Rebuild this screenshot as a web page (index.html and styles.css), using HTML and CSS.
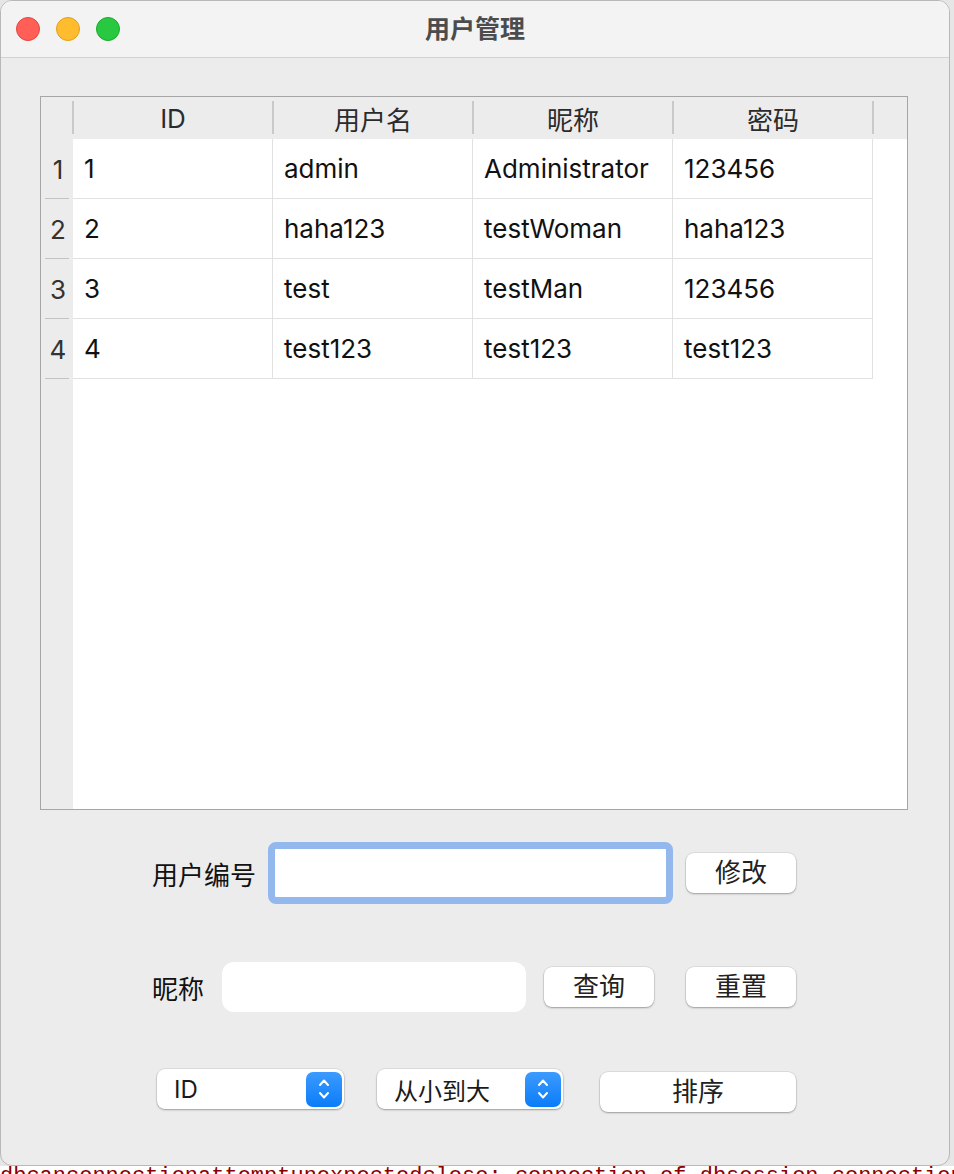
FILE: index.html
```html
<!DOCTYPE html>
<html lang="zh">
<head>
<meta charset="utf-8">
<title>用户管理</title>
<link rel="stylesheet" href="styles.css">
</head>
<body>
<div class="page">
  <div class="window">
    <div class="titlebar">
      <div class="lights">
        <span class="light red"></span>
        <span class="light yellow"></span>
        <span class="light green"></span>
      </div>
      <div class="title">用户管理</div>
    </div>
    <div class="content">
      <div class="table">
        <div class="corner"></div>
        <div class="hcell">ID</div>
        <div class="hcell">用户名</div>
        <div class="hcell">昵称</div>
        <div class="hcell">密码</div>
        <div class="hfill"></div>

        <div class="rhead">1</div>
        <div class="cell">1</div><div class="cell">admin</div><div class="cell">Administrator</div><div class="cell">123456</div><div class="fill"></div>

        <div class="rhead">2</div>
        <div class="cell">2</div><div class="cell">haha123</div><div class="cell">testWoman</div><div class="cell">haha123</div><div class="fill"></div>

        <div class="rhead">3</div>
        <div class="cell">3</div><div class="cell">test</div><div class="cell">testMan</div><div class="cell">123456</div><div class="fill"></div>

        <div class="rhead">4</div>
        <div class="cell">4</div><div class="cell">test123</div><div class="cell">test123</div><div class="cell">test123</div><div class="fill"></div>

        <div class="rhead empty"></div>
        <div class="blank"></div>
      </div>

      <div class="row row1">
        <span class="label">用户编号</span>
        <div class="focusring"><div class="field"></div></div>
        <button class="btn b-modify">修改</button>
      </div>

      <div class="row row2">
        <span class="label">昵称</span>
        <div class="field plain"></div>
        <button class="btn b-query">查询</button>
        <button class="btn b-reset">重置</button>
      </div>

      <div class="row row3">
        <div class="select s1">
          <span class="sel-text">ID</span>
          <span class="stepper">
            <svg width="14" height="26" viewBox="0 0 14 26"><path d="M3 9 L7 4.5 L11 9" fill="none" stroke="#fff" stroke-width="2" stroke-linecap="round" stroke-linejoin="round"/><path d="M3 17 L7 21.5 L11 17" fill="none" stroke="#fff" stroke-width="2" stroke-linecap="round" stroke-linejoin="round"/></svg>
          </span>
        </div>
        <div class="select s2">
          <span class="sel-text">从小到大</span>
          <span class="stepper">
            <svg width="14" height="26" viewBox="0 0 14 26"><path d="M3 9 L7 4.5 L11 9" fill="none" stroke="#fff" stroke-width="2" stroke-linecap="round" stroke-linejoin="round"/><path d="M3 17 L7 21.5 L11 17" fill="none" stroke="#fff" stroke-width="2" stroke-linecap="round" stroke-linejoin="round"/></svg>
          </span>
        </div>
        <button class="btn b-sort">排序</button>
      </div>
    </div>
  </div>
  <div class="backdrop">dbcanconnectionattemptunexpectedclose; connection of dbsession connection</div>
</div>
</body>
</html>
```

FILE: styles.css
```css
* { box-sizing: border-box; }
html, body { margin: 0; padding: 0; }
body {
  background: #e6e6e6;
  font-family: Inter, "Noto Sans CJK SC", sans-serif;
  color: #1a1a1a;
  width: 954px;
  height: 1174px;
  overflow: hidden;
}
.page { width: 954px; }
.window {
  width: 950px;
  height: 1166px;
  background: #ececec;
  border: 1px solid #b8b8b8;
  border-radius: 12px;
  overflow: hidden;
}
.titlebar {
  height: 57px;
  background: #f3f3f3;
  border-bottom: 1px solid #d2d2d2;
  display: flex;
  align-items: center;
  position: relative;
}
.lights {
  display: flex;
  gap: 16px;
  padding-left: 15px;
}
.light {
  width: 24px; height: 24px;
  border-radius: 50%;
  display: block;
}
.red { background: #ff5f57; border: 1px solid #e2463f; }
.yellow { background: #febc2e; border: 1px solid #e1a116; }
.green { background: #28c840; border: 1px solid #1aab29; }
.title {
  position: absolute;
  left: 0; right: 0; top: 0;
  height: 56px;
  line-height: 56px;
  text-align: center;
  font-size: 25px;
  font-weight: 700;
  color: #4c4c4c;
}
.content {
  padding: 38px 0 0 39px;
}
.table {
  width: 868px;
  height: 714px;
  border: 1px solid #a6a6a6;
  display: grid;
  grid-template-columns: 32px 200px 200px 200px 200px 1fr;
  grid-template-rows: 42px 60px 60px 60px 60px 1fr;
  background: #fff;
  font-size: 26px;
}
.corner, .hcell, .hfill {
  background: #ececec;
  position: relative;
}
.corner::after, .hcell::after {
  content: "";
  position: absolute;
  right: -1px;
  top: 4px;
  bottom: 5px;
  width: 2px;
  background: #c9c9c9;
  z-index: 1;
}
.hcell {
  display: flex;
  align-items: center;
  justify-content: center;
  color: #2b2b2b;
}
.rhead {
  background: #ececec;
  display: flex;
  align-items: center;
  justify-content: center;
  color: #333;
  position: relative;
  padding-left: 2px;
}
.rhead::after {
  content: "";
  position: absolute;
  left: 4px;
  right: 4px;
  bottom: -1px;
  height: 2px;
  background: #c3c3c3;
}
.rhead.empty::after { display: none; }
.cell {
  display: flex;
  align-items: center;
  padding-left: 11px;
  border-right: 1px solid #e1e1e1;
  border-bottom: 1px solid #e1e1e1;
  color: #111;
}
.fill { background: #fff; }
.blank { grid-column: 2 / 7; background: #fff; }

.row {
  display: flex;
  align-items: center;
}
.label {
  font-size: 26px;
  color: #111;
}
.row1 {
  margin-top: 32px;
  height: 62px;
  padding-left: 112px;
}
.row1 .label { width: 116px; }
.focusring {
  width: 405px;
  height: 62px;
  border: 7px solid #92b8ee;
  border-radius: 8px;
  background: #fff;
  margin-right: 13px;
}
.field { height: 100%; background: #fff; border-radius: 6px; }
.btn {
  font-family: inherit;
  font-size: 26px;
  color: #222;
  background: #fff;
  border: none;
  border-radius: 8px;
  box-shadow: 0 0 0 0.5px rgba(0,0,0,0.12), 0 1px 2px rgba(0,0,0,0.3);
  width: 110px;
  height: 40px;
  padding: 0;
  line-height: 40px;
}
.row2 {
  margin-top: 58px;
  height: 50px;
  padding-left: 112px;
}
.row2 .label { width: 70px; }
.field.plain {
  width: 304px;
  height: 50px;
  border-radius: 12px;
  margin-right: 18px;
}
.b-query { margin-right: 32px; }
.row3 {
  margin-top: 57px;
  padding-left: 117px;
  align-items: flex-start;
  height: 44px;
}
.select {
  height: 40px;
  background: #fff;
  border-radius: 8px;
  box-shadow: 0 0 0 0.5px rgba(0,0,0,0.12), 0 1px 2px rgba(0,0,0,0.3);
  display: flex;
  align-items: center;
  justify-content: space-between;
  padding: 0 2px 0 17px;
  font-size: 24px;
  color: #1a1a1a;
}
.s1 { width: 187px; margin-right: 33px; }
.s2 { width: 186px; margin-right: 37px; }
.stepper {
  width: 36px;
  height: 35px;
  border-radius: 7px;
  background: linear-gradient(#3d9bff, #0a7cf8);
  display: flex;
  align-items: center;
  justify-content: center;
}
.stepper svg { display: block; }
.b-sort { width: 196px; margin-top: 3px; }
.backdrop {
  height: 8px;
  overflow: hidden;
  background: #fff;
  font-family: "Liberation Mono", monospace;
  font-size: 22px;
  line-height: 22px;
  color: #8b0000;
  white-space: nowrap;
}
```
